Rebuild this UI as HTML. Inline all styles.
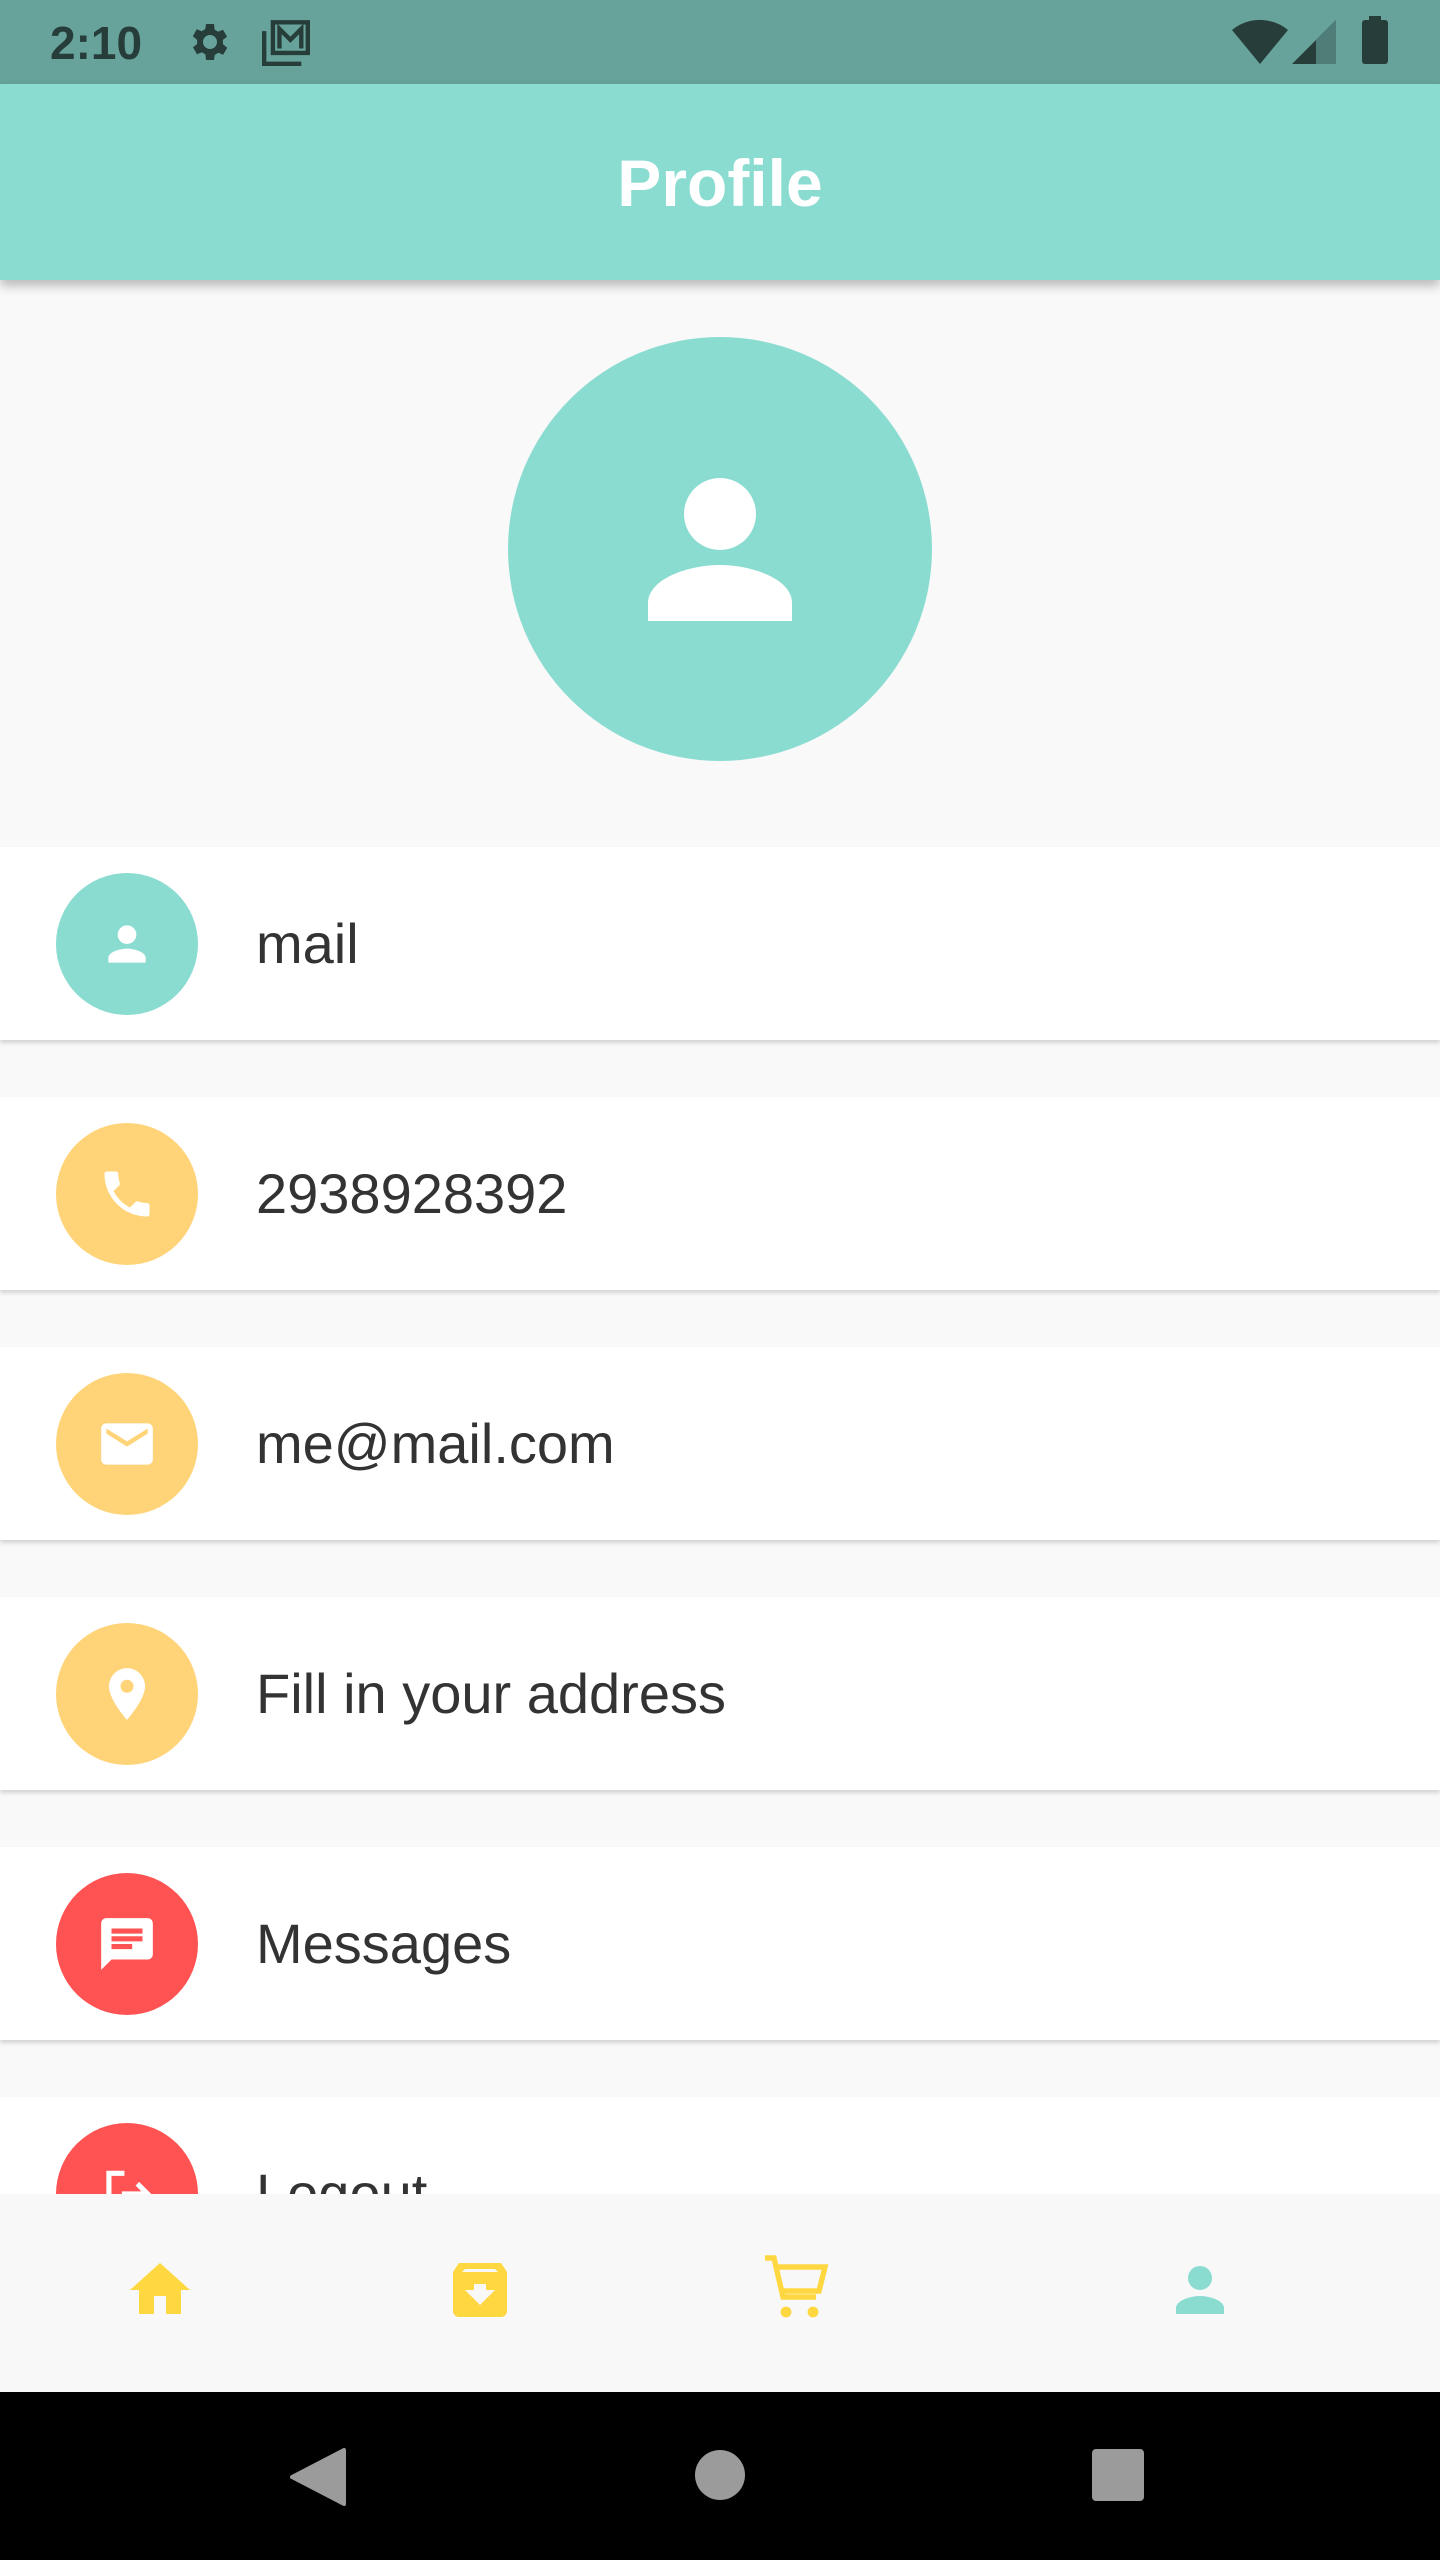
<!DOCTYPE html>
<html><head><meta charset="utf-8"><style>
*{margin:0;padding:0;box-sizing:border-box}
body{width:1440px;height:2560px;background:#f9f9f9;font-family:"Liberation Sans",sans-serif;position:relative;overflow:hidden}
.abs{position:absolute}
.status{left:0;top:0;width:1440px;height:84px;background:#67a39b}
.appbar{left:0;top:84px;width:1440px;height:196px;background:#8adcd1;box-shadow:0 6px 10px rgba(0,0,0,.25);z-index:2}
.title{width:100%;text-align:center;top:66px;color:#fff;font-size:66px;line-height:1;font-weight:bold}
.row{left:0;width:1440px;height:193px;background:#fff;box-shadow:0 3px 4px rgba(0,0,0,.15)}
.ic{position:absolute;left:56px;top:26px;width:142px;height:142px;border-radius:50%;display:flex;align-items:center;justify-content:center}
.txt{position:absolute;left:256px;top:0;line-height:193px;font-size:56px;color:#333}
.bnav{left:0;top:2194px;width:1440px;height:198px;background:#f8f8f8;z-index:3}
.sys{left:0;top:2392px;width:1440px;height:168px;background:#000;z-index:3}
</style></head><body>
<div class="abs status">
 <div class="abs" style="left:50px;top:16px;font-size:46px;color:#263d3a;font-weight:bold">2:10</div>
 <svg class="abs" style="left:184px;top:18px" width="48" height="48" viewBox="0 0 24 24"><path fill="#263d3a" d="M19.4 13a7.5 7.5 0 000-2l2.1-1.6-2-3.5-2.5 1a7 7 0 00-1.7-1L15 3h-4l-.4 2.6a7 7 0 00-1.7 1l-2.5-1-2 3.5L6.6 11a7.5 7.5 0 000 2l-2.1 1.6 2 3.5 2.5-1c.5.4 1.1.7 1.7 1L11 21h4l.4-2.6c.6-.3 1.2-.6 1.7-1l2.5 1 2-3.5zM13 15.5a3.5 3.5 0 110-7 3.5 3.5 0 010 7z"/></svg>
 <svg class="abs" style="left:258px;top:18px" width="56" height="48" viewBox="0 0 24 22"><path fill="none" stroke="#263d3a" stroke-width="2" d="M2 6v15h17M6 2h16v14H6z"/><path fill="none" stroke="#263d3a" stroke-width="2" d="M9 14V5l5 5 5-5v9"/></svg>
 <svg class="abs" style="left:1232px;top:20px" width="56" height="44" viewBox="0 0 28 22"><path fill="#263d3a" d="M14 22L0 5a22 22 0 0128 0z"/></svg>
 <svg class="abs" style="left:1292px;top:20px" width="44" height="44" viewBox="0 0 22 22"><path fill="#263d3a" d="M0 22L22 0v22z"/><path fill="#4f7d77" d="M12 10L22 0v22H12z"/></svg>
 <div class="abs" style="left:1362px;top:20px;width:26px;height:44px;background:#263d3a;border-radius:3px"></div>
 <div class="abs" style="left:1369px;top:16px;width:12px;height:6px;background:#263d3a"></div>
</div>
<div class="abs appbar"><div class="abs title">Profile</div></div>
<div class="abs" style="left:508px;top:337px;width:424px;height:424px;border-radius:50%;background:#8adcd1"></div>
<div class="abs" style="left:684px;top:478px;width:72px;height:72px;border-radius:50%;background:#fff"></div>
<svg class="abs" style="left:648px;top:565px" width="144" height="56" viewBox="0 0 144 56"><path fill="#fff" d="M0 56V38C0 14 40 0 72 0s72 14 72 38v18z"/></svg>

<div class="abs row" style="top:847px"><div class="ic" style="background:#8adcd1"><svg width="56" height="56" viewBox="0 0 24 24"><circle cx="12" cy="8" r="4" fill="#fff"/><path fill="#fff" d="M4 20v-2c0-2.7 5.3-4 8-4s8 1.3 8 4v2z"/></svg></div><div class="txt">mail</div></div>
<div class="abs row" style="top:1097px"><div class="ic" style="background:#ffd479"><svg width="60" height="60" viewBox="0 0 24 24"><path fill="#fff" d="M6.6 10.8a15 15 0 006.6 6.6l2.2-2.2c.3-.3.7-.4 1-.2 1.1.4 2.3.6 3.6.6.6 0 1 .4 1 1V20c0 .6-.4 1-1 1A17 17 0 013 4c0-.6.4-1 1-1h3.5c.6 0 1 .4 1 1 0 1.3.2 2.5.6 3.6.1.3 0 .7-.2 1z"/></svg></div><div class="txt">2938928392</div></div>
<div class="abs row" style="top:1347px"><div class="ic" style="background:#ffd479"><svg width="62" height="62" viewBox="0 0 24 24"><path fill="#fff" d="M20 4H4c-1.1 0-2 .9-2 2v12c0 1.1.9 2 2 2h16c1.1 0 2-.9 2-2V6c0-1.1-.9-2-2-2zm0 4l-8 5-8-5V6l8 5 8-5z"/></svg></div><div class="txt">me@mail.com</div></div>
<div class="abs row" style="top:1597px"><div class="ic" style="background:#ffd479"><svg width="62" height="62" viewBox="0 0 24 24"><path fill="#fff" d="M12 2a7 7 0 00-7 7c0 5.2 7 13 7 13s7-7.8 7-13a7 7 0 00-7-7zm0 9.5a2.5 2.5 0 110-5 2.5 2.5 0 010 5z"/></svg></div><div class="txt">Fill in your address</div></div>
<div class="abs row" style="top:1847px"><div class="ic" style="background:#ff5252"><svg width="62" height="62" viewBox="0 0 24 24"><path fill="#fff" d="M20 2H4c-1.1 0-2 .9-2 2v18l4-4h14c1.1 0 2-.9 2-2V4c0-1.1-.9-2-2-2zM6 9h12v2H6zm8 5H6v-2h8zm4-6H6V6h12z"/></svg></div><div class="txt">Messages</div></div>
<div class="abs row" style="top:2097px"><div class="ic" style="background:#ff5252"><svg width="62" height="62" viewBox="0 0 24 24"><path fill="none" stroke="#fff" stroke-width="2" d="M11 4H5v16h6M10 12h9M16 8l4 4-4 4"/></svg></div><div class="txt">Logout</div></div>

<div class="abs bnav">
 <svg class="abs" style="left:124px;top:60px" width="72" height="72" viewBox="0 0 24 24"><path fill="#ffd740" d="M10 20v-6h4v6h5v-8h3L12 3 2 12h3v8z"/></svg>
 <svg class="abs" style="left:444px;top:60px" width="72" height="72" viewBox="0 0 24 24"><path fill="#ffd740" d="M5 3h14l2 3v13c0 1.1-.9 2-2 2H5c-1.1 0-2-.9-2-2V6zm1 3h12l-1-1H7zm6 11l5-5h-3v-2h-4v2H7z"/></svg>
 <svg class="abs" style="left:762px;top:58px" width="72" height="72" viewBox="0 0 24 24"><path fill="none" stroke="#ffd740" stroke-width="1.8" d="M1 2h3l3 13h11M5 5h16l-2 8H7"/><circle cx="8" cy="20" r="1.8" fill="#ffd740"/><circle cx="17" cy="20" r="1.8" fill="#ffd740"/></svg>
 <svg class="abs" style="left:1164px;top:60px" width="72" height="72" viewBox="0 0 24 24"><circle cx="12" cy="8" r="4" fill="#8adcd1"/><path fill="#8adcd1" d="M4 20v-2c0-2.7 5.3-4 8-4s8 1.3 8 4v2z"/></svg>
</div>
<div class="abs sys">
 <svg class="abs" style="left:290px;top:56px" width="56" height="58" viewBox="0 0 56 58"><path fill="#9b9b9b" d="M54 2v54L2 29z" stroke="#9b9b9b" stroke-linejoin="round" stroke-width="4"/></svg>
 <div class="abs" style="left:695px;top:58px;width:50px;height:50px;border-radius:50%;background:#9b9b9b"></div>
 <div class="abs" style="left:1092px;top:57px;width:52px;height:52px;border-radius:4px;background:#9b9b9b"></div>
</div>
</body></html>
